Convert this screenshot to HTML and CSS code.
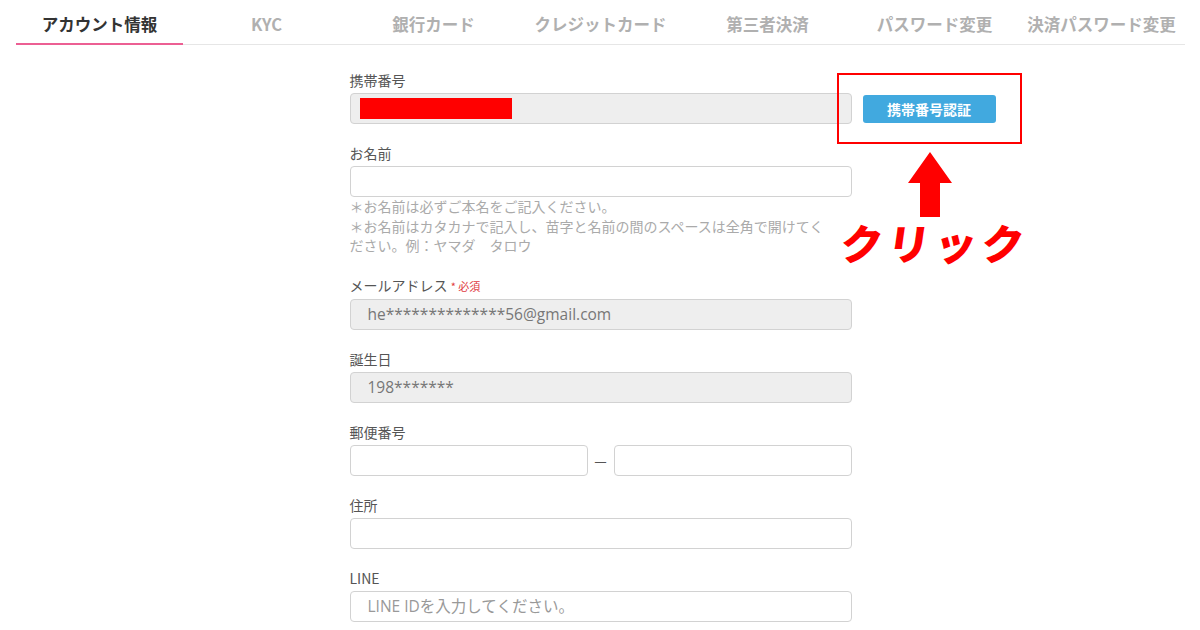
FILE: index.html
```html
<!doctype html>
<html lang="ja">
    <head>
        <meta charset="UTF-8" />
        <meta name="viewport" content="width=device-width, initial-scale=1.0" />
        <title>アカウント情報</title>
        <link rel="stylesheet" href="styles.css">
    </head>
    <body>
        <div class="page">
            <div class="tabs">
                <div class="tab active">アカウント情報</div>
                <div class="tab">KYC</div>
                <div class="tab">銀行カード</div>
                <div class="tab">クレジットカード</div>
                <div class="tab">第三者決済</div>
                <div class="tab">パスワード変更</div>
                <div class="tab">決済パスワード変更</div>
            </div>

            <div class="form">
                <div class="field">
                    <div class="label">携帯番号</div>
                    <div class="phone-row">
                        <div class="input disabled">
                            <span class="mask"></span>
                        </div>
                        <button class="verify">携帯番号認証</button>
                    </div>
                </div>

                <div class="field">
                    <div class="label">お名前</div>
                    <div class="input"></div>
                    <div class="help">
                        ＊お名前は必ずご本名をご記入ください。<br />
                        ＊お名前はカタカナで記入し、苗字と名前の間のスペースは全角で開けてく<br />ださい。例：ヤマダ　タロウ
                    </div>
                </div>

                <div class="field">
                    <div class="label">メールアドレス <span class="required">* 必須</span></div>
                    <div class="input disabled">he**************56@gmail.com</div>
                </div>

                <div class="field">
                    <div class="label">誕生日</div>
                    <div class="input disabled">198*******</div>
                </div>

                <div class="field">
                    <div class="label">郵便番号</div>
                    <div class="zip-row">
                        <div class="input"></div>
                        <span class="dash">—</span>
                        <div class="input"></div>
                    </div>
                </div>

                <div class="field">
                    <div class="label">住所</div>
                    <div class="input"></div>
                </div>

                <div class="field">
                    <div class="label">LINE</div>
                    <div class="input placeholder">LINE IDを入力してください。</div>
                </div>
            </div>

            <!-- annotation -->
            <div class="callout"></div>
            <svg class="arrow" width="44" height="66" viewBox="0 0 44 66">
                <polygon points="22,0 44,31 32,31 32,65 12,65 12,31 0,31" fill="#ff0000" />
            </svg>
            <div class="click">クリック</div>
        </div>
    </body>
</html>
```

FILE: styles.css
```css
body {
    margin: 0;
    background: #fff;
    font-family: "Noto Sans CJK JP", "Noto Sans", sans-serif;
    color: #555;
    overflow: hidden;
}
.page {
    position: relative;
    width: 1200px;
    height: 630px;
    padding: 0 15px 0 16px;
    box-sizing: border-box;
}
.tabs {
    display: flex;
    border-bottom: 1px solid #e6e6e6;
    height: 44px;
}
.tab {
    flex: 1;
    text-align: center;
    font-size: 16.5px;
    font-weight: bold;
    color: #b0b0b0;
    line-height: 42px;
    padding-top: 3px;
    box-sizing: border-box;
    white-space: nowrap;
}
.tab.active {
    color: #333;
    border-bottom: 2px solid #ec5f93;
    height: 45px;
}
.form {
    width: 502px;
    margin: 25px auto 0;
}
.field {
    margin-bottom: 19px;
}
.label {
    font-size: 14px;
    line-height: 20px;
    margin-bottom: 3px;
    color: #555;
}
.required {
    color: #e0393e;
    font-size: 11px;
}
.input {
    height: 31px;
    box-sizing: border-box;
    border: 1px solid #d2d2d2;
    border-radius: 4px;
    background: #fff;
    padding: 0 17px;
    font-family: "Open Sans", "Noto Sans CJK JP", sans-serif;
    font-size: 15.5px;
    line-height: 29px;
    color: #777;
}
.input.disabled {
    background: #eee;
}
.input.placeholder {
    color: #999;
    font-size: 15.5px;
}
.phone-row {
    display: flex;
    align-items: center;
    width: 646px;
}
.phone-row .input {
    flex: 0 0 502px;
    padding: 0 9px;
    display: flex;
    align-items: center;
}
.mask {
    width: 152px;
    height: 21px;
    background: #ff0000;
}
.verify {
    margin-left: 11px;
    width: 134px;
    height: 28px;
    border: none;
    border-radius: 3px;
    background: #41a9df;
    color: #fff;
    font-family: "Noto Sans CJK JP", sans-serif;
    font-size: 14px;
    font-weight: bold;
    padding: 0;
}
.help {
    font-size: 14px;
    line-height: 19.5px;
    color: #aaa;
}
.zip-row {
    display: flex;
    align-items: center;
}
.zip-row .input {
    flex: 1;
}
.dash {
    width: 26px;
    text-align: center;
    color: #555;
    font-size: 14px;
}
.callout {
    position: absolute;
    left: 837px;
    top: 73px;
    width: 185px;
    height: 71px;
    box-sizing: border-box;
    border: 2px solid #ff0000;
}
.arrow {
    position: absolute;
    left: 908px;
    top: 152px;
}
.click {
    position: absolute;
    left: 841px;
    top: 214px;
    font-size: 42px;
    font-weight: 900;
    letter-spacing: 5px;
    line-height: 56px;
    color: #ff0000;
    transform: skewX(-8deg);
}
```
